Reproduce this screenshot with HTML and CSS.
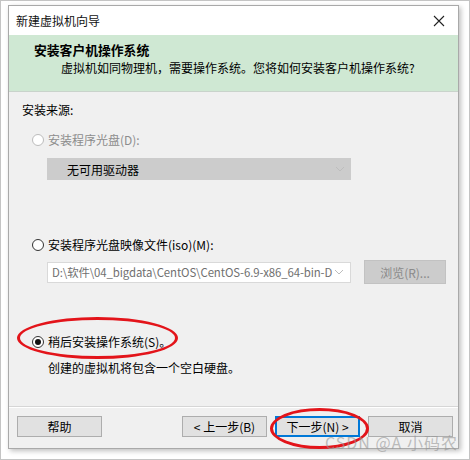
FILE: index.html
```html
<!DOCTYPE html>
<html lang="zh-CN">
<head>
<meta charset="utf-8">
<link rel="stylesheet" href="styles.css">
</head>
<body>
<div class="shot">
  <div class="window">
    <div class="titlebar">
      <span class="title">新建虚拟机向导</span>
      <svg class="close" width="12" height="12" viewBox="0 0 12 12"><path d="M1 1 L11 11 M11 1 L1 11" stroke="#222" stroke-width="1.1" fill="none"/></svg>
    </div>
    <div class="header">
      <div class="h-title">安装客户机操作系统</div>
      <div class="h-sub">虚拟机如同物理机，需要操作系统。您将如何安装客户机操作系统?</div>
    </div>
    <div class="content">
      <div class="label">安装来源:</div>
      <div class="radio-row disabled r1">
        <span class="radio"></span><span>安装程序光盘(D):</span>
      </div>
      <div class="select grey">
        <span class="select-text">无可用驱动器</span>
        <svg class="chev" width="10" height="6" viewBox="0 0 10 6"><path d="M1 1 L5 5 L9 1" stroke="#bdbdbd" fill="none"/></svg>
      </div>
      <div class="radio-row r2">
        <span class="radio"></span><span>安装程序光盘映像文件(iso)(M):</span>
      </div>
      <div class="iso-row">
        <div class="select white">
          <span class="select-text path">D:\软件\04_bigdata\CentOS\CentOS-6.9-x86_64-bin-D</span>
          <svg class="chev" width="10" height="6" viewBox="0 0 10 6"><path d="M1 1 L5 5 L9 1" stroke="#bdbdbd" fill="none"/></svg>
        </div>
        <div class="browse">浏览(R)...</div>
      </div>
      <div class="radio-row r3">
        <span class="radio checked"></span><span>稍后安装操作系统(S)。</span>
      </div>
      <div class="note">创建的虚拟机将包含一个空白硬盘。</div>
    </div>
    <div class="footer">
      <div class="btn">帮助</div>
      <div class="spacer"></div>
      <div class="btn">&lt; 上一步(B)</div>
      <div class="btn focus">下一步(N) &gt;</div>
      <div class="btn">取消</div>
    </div>
  </div>
  <div class="mark ellipse-a"></div>
  <div class="mark ellipse-b"></div>
  <div class="watermark">CSDN @A 小码农</div>
</div>
</body>
</html>
```

FILE: styles.css
```css
html, body {
  margin: 0;
  padding: 0;
  background: #ffffff;
}
body {
  font-family: "Noto Sans CJK SC", "Noto Sans", sans-serif;
  font-size: 12px;
  color: #000;
}
.shot {
  position: relative;
  width: 470px;
  height: 460px;
  box-sizing: border-box;
  border: 1px solid #c4c4c4;
  padding: 4px 0 0 7px;
  background: #fff;
}
.window {
  width: 451px;
  height: 444px;
  box-sizing: border-box;
  border: 1px solid #a9a9a9;
  background: #f0f0f0;
  display: flex;
  flex-direction: column;
  box-shadow: 2px 2px 5px rgba(0,0,0,0.25);
}
.titlebar {
  height: 29px;
  background: #fff;
  display: flex;
  align-items: center;
  padding: 0 7px 0 7px;
}
.title {
  font-size: 12px;
  flex: 1;
  color: #111;
}
.close {
  margin-right: 6px;
}
.header {
  height: 57px;
  background: #cfe8d3;
  border-bottom: 1px solid #c9d3cb;
  box-sizing: border-box;
  padding-top: 6px;
}
.h-title {
  font-weight: bold;
  line-height: 18px;
  padding-left: 25px;
  font-size: 12.8px;
}
.h-sub {
  line-height: 18px;
  padding-left: 52px;
}
.content {
  flex: 1;
  padding: 9px 0 0 13px;
  border-bottom: 1px solid #d6d6d6;
}
.label {
  line-height: 18px;
}
.radio-row {
  display: flex;
  align-items: center;
  gap: 4px;
  line-height: 18px;
  padding-left: 10px;
}
.r1 { margin-top: 12px; }
.r2 { margin-top: 56px; }
.r3 { margin-top: 49px; }
.disabled { color: #8d8d8d; }
.radio {
  width: 10px;
  height: 10px;
  border: 1px solid #333;
  border-radius: 50%;
  background: #fff;
  display: inline-flex;
  align-items: center;
  justify-content: center;
}
.disabled .radio {
  border-color: #bcbcbc;
}
.radio.checked::after {
  content: "";
  width: 6px;
  height: 6px;
  border-radius: 50%;
  background: #111;
}
.select {
  width: 304px;
  height: 22px;
  box-sizing: border-box;
  margin-left: 25px;
  display: flex;
  align-items: center;
  justify-content: space-between;
  padding-right: 6px;
}
.select.grey {
  background: #cccccc;
  margin-top: 9px;
}
.select-text {
  padding-left: 20px;
  white-space: nowrap;
  overflow: hidden;
}
.select.white {
  background: #fff;
  border: 1px solid #d9d9d9;
  height: 21px;
}
.path {
  padding-left: 4px;
  color: #707070;
  width: 282px;
  font-size: 11.4px;
  letter-spacing: -0.1px;
}
.iso-row {
  display: flex;
  align-items: center;
  margin-top: 6px;
}
.iso-row .select {
  margin-left: 25px;
}
.browse {
  width: 82px;
  height: 24px;
  box-sizing: border-box;
  margin-left: 13px;
  background: #cccccc;
  border: 1px solid #c2c2c2;
  color: #8a8a8a;
  display: flex;
  align-items: center;
  justify-content: center;
}
.note {
  margin-top: 8px;
  padding-left: 26px;
  line-height: 18px;
}
.footer {
  height: 41px;
  box-sizing: border-box;
  border-top: 1px solid #ffffff;
  display: flex;
  align-items: flex-start;
  padding: 8px 5px 0 8px;
  gap: 8px;
}
.spacer { flex: 1; }
.btn {
  width: 85px;
  height: 21px;
  box-sizing: border-box;
  background: #e1e1e1;
  border: 1px solid #adadad;
  display: flex;
  align-items: center;
  justify-content: center;
  font-size: 12px;
}
.btn.focus {
  border: 2px solid #0078d7;
}
.mark {
  position: absolute;
  border: 3px solid #e3141a;
  border-radius: 50%;
  box-sizing: border-box;
}
.ellipse-a {
  left: 16px;
  top: 316px;
  width: 161px;
  height: 42px;
}
.ellipse-b {
  left: 269px;
  top: 407px;
  width: 99px;
  height: 41px;
}
.watermark {
  position: absolute;
  left: 324px;
  top: 430px;
  font-size: 16px;
  line-height: 22px;
  letter-spacing: 1px;
  color: rgba(150,150,150,0.6);
  white-space: nowrap;
}
```
